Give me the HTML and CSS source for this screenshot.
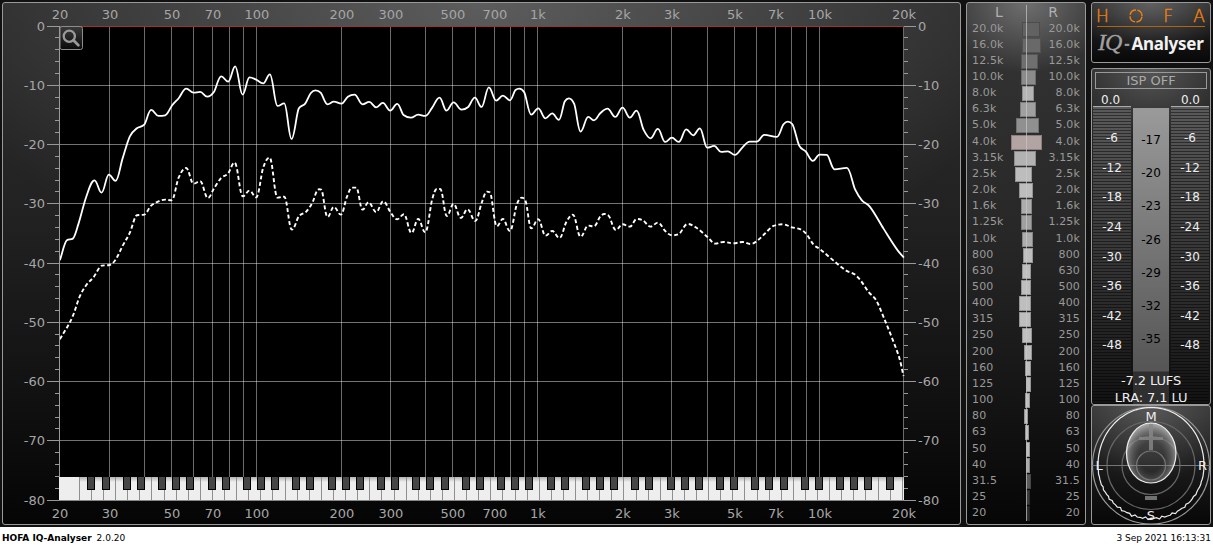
FILE: index.html
```html
<!DOCTYPE html>
<html lang="en">
<head>
<meta charset="utf-8">
<title>HOFA IQ-Analyser</title>
<link rel="stylesheet" href="styles.css">
</head>
<body>
<main class="app">
  <section class="panel spectrum">
    <svg id="spectrum" class="spectrum-svg" width="957" height="521" viewBox="3 3 957 521">
      <defs>
        <linearGradient id="keyShade" x1="0" y1="0" x2="0" y2="1">
          <stop offset="0" stop-color="#b4b4b4"/><stop offset="1" stop-color="#eee"/>
        </linearGradient>
        <linearGradient id="btn" x1="0" y1="0" x2="0" y2="1">
          <stop offset="0" stop-color="#3a3a3a"/><stop offset="1" stop-color="#0a0a0a"/>
        </linearGradient>
      </defs>
      <rect x="59" y="26" width="845" height="474" fill="#000"/>
      <g id="grid"></g>
      <g id="curves"></g>
      <g id="keys"></g>
      <g class="zoom-btn">
        <rect x="60" y="26.5" width="22.5" height="23" rx="2" fill="url(#btn)" stroke="#8c8c8c"/>
        <circle cx="69.3" cy="36.2" r="5.6" fill="none" stroke="#999" stroke-width="2.3"/>
        <path d="M73.5 40.3L78.4 45.2" stroke="#999" stroke-width="2.7" stroke-linecap="round"/>
      </g>
      <g id="axis" class="axis"></g>
    </svg>
  </section>

  <section class="panel bands">
    <div class="bands-head"><span>L</span><span>R</span></div>
    <div id="bands" class="bands-list"></div>
    <div class="bands-axis"></div>
  </section>

  <aside class="side">
    <header class="panel logo">
      <div class="brand">
        <span>H</span>
        <svg width="14" height="14" viewBox="0 0 14 14"><circle cx="7" cy="7" r="6" fill="none" stroke="#f08010" stroke-width="1.4" stroke-dasharray="7.92 1.5" stroke-dashoffset="-0.75"/></svg>
        <span>F</span><span>A</span>
      </div>
      <div class="product"><i>IQ</i><b class="dash">-</b><b>Analyser</b></div>
    </header>
    <section class="panel meters">
      <div class="isp">ISP OFF</div>
      <div class="peaks"><span>0.0</span><span>0.0</span></div>
      <div class="columns">
        <div class="meter"></div>
        <div class="loudness"></div>
        <div class="meter"></div>
      </div>
      <div class="readout"><div>-7.2 LUFS</div><div>LRA: 7.1 LU</div></div>
    </section>
    <section class="panel scope">
      <svg width="118" height="118" viewBox="1092 406 118 118">
        <defs>
          <radialGradient id="blob" cx=".5" cy=".56" r=".55">
            <stop offset=".45" stop-color="#777" stop-opacity=".12"/>
            <stop offset=".72" stop-color="#999" stop-opacity=".4"/>
            <stop offset="1" stop-color="#ccc" stop-opacity=".75"/>
          </radialGradient>
        </defs>
        <g fill="none" stroke="#666" stroke-width="1.2">
          <circle cx="1151" cy="465.5" r="58.5" stroke="#999"/>
          <circle cx="1151" cy="465.5" r="44"/>
          <circle cx="1151" cy="465.5" r="29"/>
          <path d="M1092 465.5H1210" stroke="#777" stroke-width="1"/>
        </g>
        <path id="ring" fill="none" stroke="#eee" stroke-width="1.2"/>
        <path d="M1151 423C1165 423 1176 438 1176 453C1176 470 1165 483 1151 483C1137 483 1126.500 470 1126.500 453C1126.500 438 1137 423 1151 423Z" fill="url(#blob)" stroke="#eee" stroke-width="1.2"/>
        <circle cx="1151" cy="465.5" r="14.500" fill="none" stroke="#777" stroke-width="1.2"/>
        <path d="M1149 424h4v26h-4zM1139 437h24v3h-24zM1145 496h12v4h-12z" fill="#888" fill-opacity=".8"/>
        <g class="scope-text">
          <text x="1151" y="420.500">M</text><text x="1151" y="519.500">S</text>
          <text x="1099" y="470">L</text><text x="1202.500" y="470">R</text>
        </g>
      </svg>
    </section>
  </aside>
</main>
<footer class="status">
  <div><b>HOFA IQ-Analyser</b><span class="version">2.0.20</span></div>
  <time>3 Sep 2021 16:13:31</time>
</footer>
<script src="app.js"></script>
</body>
</html>
```

FILE: styles.css
```css
* { box-sizing: border-box; }
body {
  margin: 0;
  background: #fff;
  font-family: "DejaVu Sans", sans-serif;
  overflow: hidden;
}
.app {
  display: flex;
  gap: 5px;
  height: 527px;
  padding: 2px;
  background: #111;
}
.panel {
  border: 1px solid #999;
  border-radius: 3px;
}
.spectrum {
  width: 959px;
  height: 523px;
  flex: none;
  background:
    radial-gradient(ellipse 560px 300px at 50% 0, rgba(160,160,160,.42), rgba(120,120,120,0)),
    linear-gradient(#2c2c2c, #222 40%, #050505);
}
.spectrum-svg { display: block; }
.axis text { font-size: 13px; fill: #a6a6a6; }

.bands {
  position: relative;
  width: 120px;
  height: 523px;
  flex: none;
  color: #999;
  background:
    radial-gradient(ellipse 85px 70px at 50% 0, rgba(190,190,190,.42), rgba(120,120,120,0)),
    linear-gradient(#353535, #272727 45%, #060606);
}
.bands-head {
  display: flex;
  justify-content: space-between;
  height: 17.5px;
  padding: 1px 27px 0 28px;
  font-size: 14px;
  line-height: 17px;
  color: #b0b0b0;
}
.band {
  display: grid;
  grid-template-columns: 38px 1fr 38px;
  height: 16.17px;
  padding: 0 5px;
  font-size: 11px;
  line-height: 16.5px;
  letter-spacing: .15px;
}
.band span:last-child { text-align: right; }
.band .bar {
  height: 15px;
  margin-top: 1px;
  border: 1px solid rgba(0,0,0,.22);
}
.bands-axis {
  position: absolute;
  left: 59px;
  top: 2px;
  width: 1px;
  height: 516px;
  background: rgba(200,200,200,.7);
}

.side { width: 120px; flex: none; }
.logo {
  height: 61px;
  padding: 5px 5px 0;
  background:
    radial-gradient(ellipse 80px 50px at 50% 0, rgba(170,170,170,.42), rgba(120,120,120,0)),
    linear-gradient(#2b2b2b, #080808);
}
.brand {
  display: flex;
  justify-content: space-between;
  align-items: center;
  height: 19px;
  padding-bottom: 3px;
  border-bottom: 1px solid #b0640f;
  color: #f08010;
  font-size: 17px;
  font-weight: 200;
  line-height: 14px;
  -webkit-text-stroke: .4px #f08010;
}
.brand span:first-child { margin-left: -1px; }
.product {
  display: flex;
  align-items: baseline;
  height: 30px;
  padding-left: 1px;
  color: #f2f2f2;
  line-height: 30px;
  white-space: nowrap;
}
.product i {
  font-family: "Liberation Serif", serif;
  font-size: 24px;
  color: #a0a0a0;
  letter-spacing: -1px;
  -webkit-text-stroke: .3px #a0a0a0;
}
.product b {
  font-family: "Noto Sans", sans-serif;
  font-size: 17px;
  letter-spacing: -.25px;
}
.product .dash { margin: 0 2px 0 3px; color: #999; }

.meters {
  position: relative;
  height: 337px;
  margin-top: 5px;
  padding: 3px 1px 0;
  background:
    radial-gradient(ellipse 80px 70px at 50% 0, rgba(150,150,150,.4), rgba(120,120,120,0)),
    linear-gradient(#2b2b2b, #101010);
}
.isp {
  height: 17px;
  margin: 0 2px;
  border: 1px solid #999;
  text-align: center;
  font-size: 13px;
  line-height: 16px;
  color: #aaa;
}
.peaks {
  display: flex;
  justify-content: space-between;
  height: 17px;
  padding: 3px 9px 0 8px;
  font-size: 12px;
  line-height: 16px;
  color: #eee;
}
.columns { display: flex; gap: 2px; height: 298px; }
.meter {
  width: 38px;
  padding-top: 17px;
  border-top: 1px solid #aaa;
  background:
    linear-gradient(rgba(0,0,0,0), rgba(0,0,0,.8)),
    repeating-linear-gradient(#5a5a5a 0 2px, #303030 2px 3px);
  color: #eee;
}
.meter div, .loudness div { text-align: center; font-size: 12px; }
.meter div { height: 29.65px; line-height: 29px; }
.loudness div { height: 33.2px; line-height: 33px; }
.loudness {
  width: 36px;
  margin-top: 2px;
  padding-top: 16px;
  background: linear-gradient(#9a9a9a, #555 263px, #2f2f2f 264px, #2f2f2f);
  color: #000;
}
.readout {
  position: absolute;
  left: 0;
  right: 0;
  top: 302.5px;
  text-align: center;
  font-size: 13px;
  line-height: 17px;
  letter-spacing: -.1px;
  color: #eee;
}
.scope {
  height: 120px;
  background:
    radial-gradient(ellipse 85px 75px at 50% 0, rgba(150,150,150,.4), rgba(120,120,120,0)),
    linear-gradient(#303030, #070707);
}
.scope svg { display: block; }
.scope-text { font-size: 13px; fill: #eee; text-anchor: middle; }

.status {
  display: flex;
  justify-content: space-between;
  height: 20px;
  padding: 0 2px;
  font-size: 9px;
  line-height: 22px;
  color: #000;
}
.version { margin-left: 5px; }
```

FILE: app.js
```js
const NS = 'http://www.w3.org/2000/svg';
function add(parent, tag, attrs, text) {
  const el = document.createElementNS(NS, tag);
  for (const k in attrs) el.setAttribute(k, attrs[k]);
  if (text !== undefined) el.textContent = text;
  parent.appendChild(el);
  return el;
}
const $ = id => document.getElementById(id);
const freqX = f => 59.5 + 844 * Math.log10(f / 20) / 3;
const dbY = db => Math.floor(26 - db * 5.925 + 0.001);

// Grid
const grid = $('grid'), axis = $('axis');
const freqs = [];
for (const m of [10, 100, 1000, 10000]) for (let i = 1; i < 10; i++) {
  const f = m * i;
  if (f >= 20 && f <= 20000) freqs.push(f);
}
for (const f of freqs) {
  add(grid, 'rect', { x: Math.floor(freqX(f) + .2), y: 26, width: 1, height: 474, fill: '#fff', 'fill-opacity': .42 });
}
for (let db = 0; db >= -80; db -= 2) {
  const y = dbY(db), major = db % 10 === 0;
  if (major) {
    add(grid, 'rect', { x: 59, y, width: 845, height: 1, fill: db === 0 ? '#a33030' : '#fff', 'fill-opacity': db === 0 ? 1 : .45 });
    add(axis, 'text', { x: 45, y: y + 5, 'text-anchor': 'end' }, db);
    add(axis, 'text', { x: 918, y: y + 5 }, db);
  }
  const len = major ? 12 : 4;
  add(axis, 'rect', { x: 59 - len, y, width: len, height: 1, fill: '#999' });
  add(axis, 'rect', { x: 904, y, width: len, height: 1, fill: '#999' });
}
add(axis, 'rect', { x: 59, y: 26, width: 1, height: 451, fill: '#999' });
add(axis, 'rect', { x: 59, y: 500, width: 845, height: 1, fill: '#888' });
const labels = { 20: '20', 30: '30', 50: '50', 70: '70', 100: '100', 200: '200', 300: '300', 500: '500', 700: '700',
  1000: '1k', 2000: '2k', 3000: '3k', 5000: '5k', 7000: '7k', 10000: '10k', 20000: '20k' };
for (const f in labels) for (const y of [19, 518]) {
  add(axis, 'text', { x: Math.floor(freqX(+f) + .2) + 1, y, 'text-anchor': 'middle' }, labels[f]);
}

// Piano keyboard
const keys = $('keys');
add(keys, 'rect', { x: 59, y: 477, width: 845, height: 23, fill: '#eee' });
add(keys, 'rect', { x: 79, y: 477, width: 825, height: 5, fill: 'url(#keyShade)' });
for (let x = 79.4; x < 903; x += 12.1) {
  add(keys, 'rect', { x: Math.floor(x), y: 477, width: 1, height: 23, fill: '#8f8f8f' });
}
for (let n = 20; n < 138; n++) {
  if (![1, 3, 6, 8, 10].includes(n % 12)) continue;
  const x = Math.round(freqX(440 * 2 ** ((n - 69) / 12)) - 3.9 + (n - 20) * .005);
  if (x > 892) continue;
  add(keys, 'rect', { x, y: 477, width: 8, height: 13, fill: '#000' });
  add(keys, 'rect', { x: x + 1, y: 477, width: 6, height: 12, fill: '#464646' });
}

// Curves, sampled in thirds of a pixel
const peak = [179,780,200,720,218,715,235,670,258,590,283,540,304,577,326,523,346,542,367,475,389,408,410,384,432,373,453,329,475,347,495,345,516,315,536,293,558,265,580,277,600,275,621,289,641,275,663,228,684,244,705,198,727,283,748,231,768,238,789,249,809,222,832,317,852,309,874,416,896,324,915,310,
  932,278,946,270,962,278,982,312,1001,304,1024,310,1043,289,1063,283,1087,312,1107,305,1128,321,1148,308,1170,331,1191,311,1210,344,1232,352,1254,343,1275,347,1296,322,1318,292,1339,331,1360,306,1384,328,1404,320,1424,292,1444,320,1466,261,1488,301,1508,286,1529,300,1546,269,1557,265,1572,276,1593,343,1614,324,1636,354,1656,339,1676,359,1694,303,1706,294,1722,311,1741,394,1764,350,1781,360,1800,339,
  1822,325,1845,350,1867,322,1889,352,1909,331,1930,388,1951,414,1973,386,1995,425,2015,412,2036,425,2058,387,2079,405,2099,384,2121,442,2142,437,2163,455,2183,453,2204,464,2227,441,2249,424,2270,424,2292,404,2330,410,2350,372,2363,364,2376,371,2397,436,2417,454,2438,482,2458,463,2480,464,2503,507,2540,503,2565,568,2585,600,2608,618,2650,685,2693,751,2711,772];
const avg = [179,1017,218,947,238,890,260,852,279,832,305,796,328,794,345,780,367,737,389,697,410,645,432,643,453,616,475,603,495,598,514,600,535,533,558,503,580,550,600,543,623,593,641,565,663,533,684,519,703,487,728,588,748,571,768,591,789,502,808,472,832,592,852,589,875,688,896,648,918,634,
  938,604,950,572,957,567,963,568,982,650,1001,620,1022,643,1040,590,1056,562,1068,562,1087,628,1105,606,1128,635,1149,603,1170,634,1191,657,1211,642,1234,698,1254,656,1275,696,1296,597,1310,566,1320,566,1340,647,1360,611,1382,653,1402,627,1425,662,1445,606,1460,574,1469,576,1490,678,1508,656,1529,692,1550,612,1565,592,1576,602,1593,684,1614,657,1636,706,1656,692,1678,713,1698,666,1718,643,1741,709,1764,676,1781,678,1800,649,
  1812,641,1825,646,1847,689,1867,672,1889,679,1910,656,1928,660,1951,679,1973,667,1995,692,2015,705,2036,701,2062,671,2085,680,2123,711,2145,730,2170,725,2200,729,2227,725,2250,731,2273,720,2295,699,2320,677,2347,672,2375,681,2405,689,2420,703,2440,733,2460,747,2500,781,2538,811,2563,822,2581,840,2605,875,2628,900,2652,955,2680,1025,2698,1075,2710,1127];

// Monotone cubic interpolation keeps the extrema at the sampled points
function smooth(flat) {
  const p = [];
  for (let i = 0; i < flat.length; i += 2) p.push([flat[i] / 3, flat[i + 1] / 3]);
  const slope = i => (p[i + 1][1] - p[i][1]) / (p[i + 1][0] - p[i][0]);
  const t = p.map((_, i) => {
    if (i === 0) return slope(0);
    if (i === p.length - 1) return slope(i - 1);
    const a = slope(i - 1), b = slope(i);
    if (a * b <= 0) return 0;
    return Math.sign(a) * Math.min(Math.abs(a + b) / 2, 2.2 * Math.abs(a), 2.2 * Math.abs(b));
  });
  let d = `M${p[0]}`;
  for (let i = 1; i < p.length; i++) {
    const w = p[i][0] - p[i - 1][0];
    const h0 = w * (t[i - 1] === 0 ? .4 : .333), h1 = w * (t[i] === 0 ? .4 : .333);
    d += `C${p[i - 1][0] + h0},${p[i - 1][1] + t[i - 1] * h0} ${p[i][0] - h1},${p[i][1] - t[i] * h1} ${p[i]}`;
  }
  return d;
}
const line = { fill: 'none', stroke: '#fff', 'stroke-width': 1.8, 'stroke-linejoin': 'round', transform: 'translate(.2 .3)' };
add($('curves'), 'path', { ...line, d: smooth(peak) });
add($('curves'), 'path', { ...line, 'stroke-width': 1.9, 'stroke-dasharray': '4 2.5', d: smooth(avg) });

// Band correlation rows: label, left, right (thirds of a pixel), shade
const bands = [['20.0k',185,240,'#626262'],['16.0k',186,242,'#696969'],['12.5k',183,234,'#6f6f6f'],['10.0k',183,227,'#8b8b8b'],['8.0k',186,222,'#b4b4b4'],
  ['6.3k',180,228,'#a0a0a0'],['5.0k',168,237,'#909090'],['4.0k',153,246,'#b3a4a4'],['3.15k',163,228,'#b2b2b2'],['2.5k',166,216,'#bdbdbd'],['2.0k',177,218,'#bdbdbd'],
  ['1.6k',184,216,'#adadad'],['1.25k',184,218,'#a0a0a0'],['1.0k',186,218,'#acacac'],['800',188,217,'#bebebe'],['630',187,213,'#bebebe'],['500',183,213,'#bebebe'],
  ['400',178,214,'#bebebe'],['315',178,213,'#bebebe'],['250',185,216,'#bebebe'],['200',191,216,'#bebebe'],['160',195,214,'#bebebe'],['125',198,212,'#bebebe'],
  ['100',195,210,'#bebebe'],['80',193,206,'#bebebe'],['63',195,208,'#bebebe'],['50',197,210,'#bebebe'],['40',197,210,'#aaa'],['31.5',198,212,'#5a5a5a'],['25',198,210,'#3c3c3c'],['20',198,210,'#2c2c2c']];
$('bands').innerHTML = bands.map(([n, a, b, c]) =>
  `<div class="band"><span>${n}</span><div class="bar" style="margin-left:${Math.round(a / 3) - 50}px;width:${Math.round((b - a) / 3)}px;background-color:${c}"></div><span>${n}</span></div>`).join('');

// Level scales
document.querySelectorAll('.meter').forEach(m => {
  m.innerHTML = [-6, -12, -18, -24, -30, -36, -42, -48].map(v => `<div>${v}</div>`).join('');
});
document.querySelector('.loudness').innerHTML = [-17, -20, -23, -26, -29, -32, -35].map(v => `<div>${v}</div>`).join('');

// Scope outline: smooth on top, jagged towards S
let ring = '';
for (let i = 0; i <= 120; i++) {
  const a = i / 120 * 2 * Math.PI, s = Math.sin(a);
  const jag = s > .1 ? (Math.sin(i * 1.9) + Math.sin(i * 3.1)) * .7 * s : 0;
  const r = 53 + (s < 0 ? 5 * s * s : 0) + jag;
  ring += `${i ? 'L' : 'M'}${(1151 + r * Math.cos(a)).toFixed(1)} ${(465.5 + r * s).toFixed(1)}`;
}
$('ring').setAttribute('d', ring);
```
